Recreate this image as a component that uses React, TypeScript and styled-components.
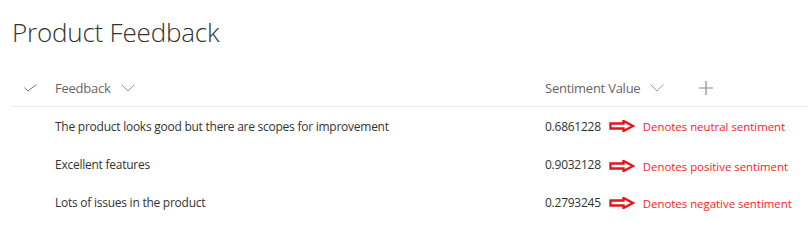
import React from "react";
import styled, { createGlobalStyle } from "styled-components";

const Global = createGlobalStyle`
  html, body { margin: 0; padding: 0; background: #ffffff; }
  body { font-family: "Open Sans", "Noto Sans", sans-serif; }
`;

const Page = styled.div`
  padding: 12px 0 0 12px;
  width: 796px;
`;

const Title = styled.h1`
  margin: 0;
  font-family: "Open Sans", sans-serif;
  font-weight: 300;
  font-size: 26px;
  line-height: 40px;
  color: #333333;
  letter-spacing: -0.2px;
`;

const Table = styled.div`
  margin-top: 18px;
  display: flex;
  flex-direction: column;
`;

const HeaderRow = styled.div`
  display: grid;
  grid-template-columns: 43px 490px 1fr;
  align-items: center;
  height: 36px;
  border-bottom: 1px solid #eaeaea;
  color: #666666;
  font-size: 13px;
  letter-spacing: -0.25px;
`;

const Row = styled.div`
  display: grid;
  grid-template-columns: 43px 490px 1fr;
  align-items: center;
  height: 38px;
  color: #333333;
  font-size: 12px;
  letter-spacing: -0.25px;
`;

const CheckCell = styled.div`
  display: flex;
  justify-content: center;
  align-items: center;
  padding-right: 6px;
`;

const HeaderCell = styled.div`
  display: flex;
  align-items: center;
  gap: 10px;
`;

const AddButton = styled.div`
  display: flex;
  align-items: center;
  margin-left: 25px;
`;

const Cell = styled.div`
  display: flex;
  align-items: center;
`;

const Note = styled.div<{ $offset?: number }>`
  display: flex;
  align-items: center;
  margin-left: 8px;
  gap: 8px;
  color: #ff1a1a;
  font-size: 11.4px;
  letter-spacing: 0;
  position: relative;
  top: ${(p) => p.$offset ?? 0}px;
`;

const Check = () => (
  <svg width="13" height="8" viewBox="0 0 13 8">
    <path d="M0.5 3.5 L4 7 L12.5 0.5" fill="none" stroke="#777" strokeWidth="1" />
  </svg>
);

const Chevron = () => (
  <svg width="14" height="8" viewBox="0 0 14 8">
    <path d="M0.5 0.5 L7 7 L13.5 0.5" fill="none" stroke="#999" strokeWidth="1" />
  </svg>
);

const Plus = () => (
  <svg width="14" height="14" viewBox="0 0 14 14">
    <path d="M7 0 V14 M0 7 H14" fill="none" stroke="#888" strokeWidth="1.2" />
  </svg>
);

const Arrow = () => (
  <svg width="26" height="12" viewBox="0 0 26 12">
    <path
      d="M1.5 3.5 H14.5 V1 L24 6 L14.5 11 V8.5 H1.5 Z"
      fill="#ffffff"
      stroke="#e8141c"
      strokeWidth="2.4"
      strokeLinejoin="miter"
    />
  </svg>
);

const rows = [
  { text: "The product looks good but there are scopes for improvement", value: "0.6861228", note: "Denotes neutral sentiment", off: 0 },
  { text: "Excellent features", value: "0.9032128", note: "Denotes positive sentiment", off: 2 },
  { text: "Lots of issues in the product", value: "0.2793245", note: "Denotes negative sentiment", off: 1 },
];

export default function App() {
  return (
    <>
      <Global />
      <Page>
        <Title>Product Feedback</Title>
        <Table>
          <HeaderRow>
            <CheckCell>
              <Check />
            </CheckCell>
            <HeaderCell>
              Feedback <Chevron />
            </HeaderCell>
            <HeaderCell>
              Sentiment Value <Chevron />
              <AddButton>
                <Plus />
              </AddButton>
            </HeaderCell>
          </HeaderRow>
          {rows.map((r) => (
            <Row key={r.value}>
              <div />
              <Cell>{r.text}</Cell>
              <Cell>
                {r.value}
                <Note $offset={r.off}>
                  <Arrow />
                  {r.note}
                </Note>
              </Cell>
            </Row>
          ))}
        </Table>
      </Page>
    </>
  );
}
